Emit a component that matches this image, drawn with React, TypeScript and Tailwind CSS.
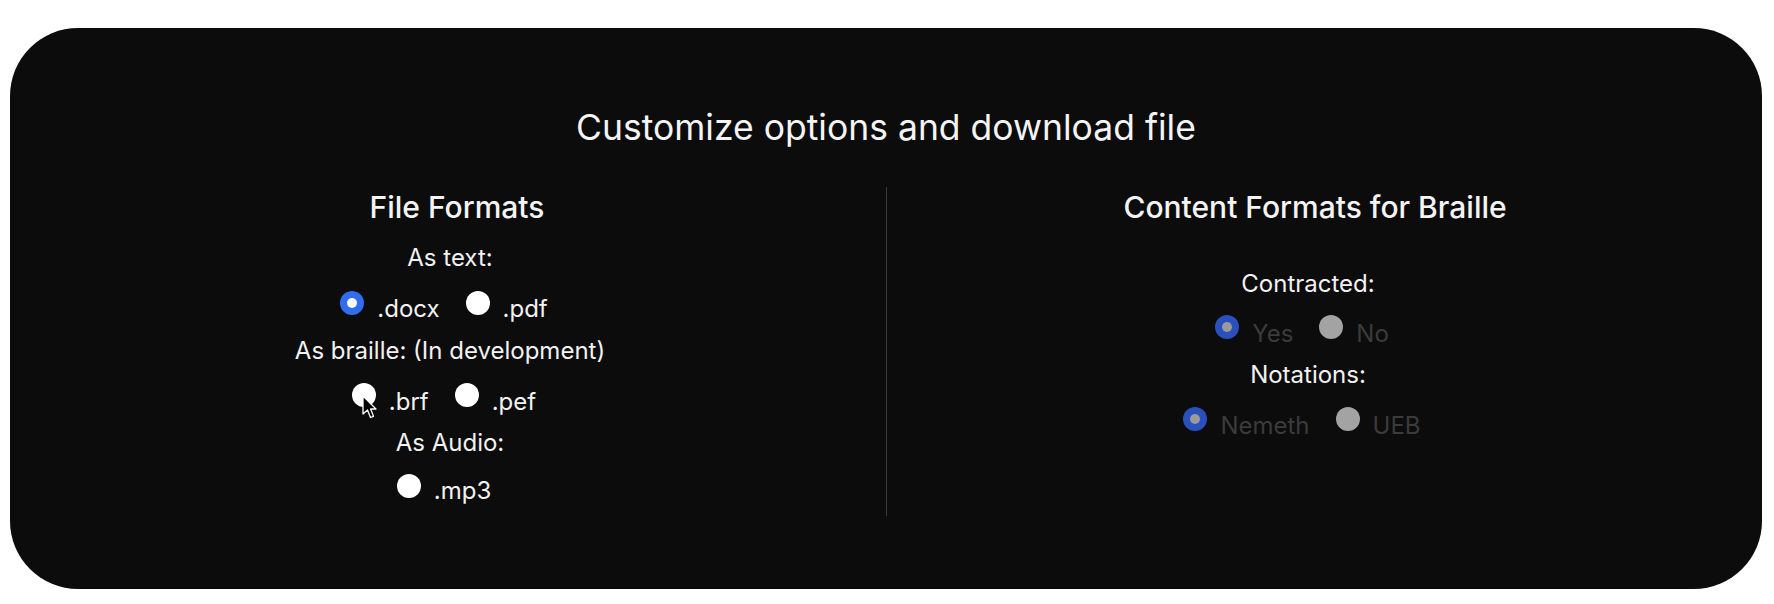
import React from "react";

type Opt = { label: string; checked?: boolean; cursor?: boolean };

function Radio({ checked, disabled, cursor }: { checked?: boolean; disabled?: boolean; cursor?: boolean }) {
  let outer = "bg-white";
  let inner: string | null = null;
  if (checked && !disabled) {
    outer = "bg-[#2f6cf0]";
    inner = "bg-white";
  } else if (checked && disabled) {
    outer = "bg-[#2a50bd]";
    inner = "bg-[#9a9a9a]";
  } else if (!checked && disabled) {
    outer = "bg-[#a3a3a3]";
  }
  return (
    <span className={`relative flex h-[24px] w-[24px] shrink-0 items-center justify-center rounded-full ${outer}`}>
      {inner && <span className={`h-[10px] w-[10px] rounded-full ${inner}`} />}
      {cursor && (
        <svg
          className="absolute left-[10px] top-[12px]"
          width="16"
          height="25"
          viewBox="0 0 16 25"
        >
          <path
            d="M1 1 L1 19 L5.5 15 L8.5 22.5 L11.5 21.3 L8.6 14 L14 14 Z"
            fill="#000"
            stroke="#fff"
            strokeWidth="1.3"
            strokeLinejoin="round"
          />
        </svg>
      )}
    </span>
  );
}

function Row({ opts, disabled, mt, textMt }: { opts: Opt[]; disabled?: boolean; mt: string; textMt: string }) {
  return (
    <div className={`flex items-start pr-[12px] ${mt}`}>
      {opts.map((o, i) => (
        <div key={o.label} className={`flex items-start ${i > 0 ? "ml-[26px]" : ""}`}>
          <Radio checked={o.checked} disabled={disabled} cursor={o.cursor} />
          <span
            className={`ml-[13px] text-[24px] leading-[30px] ${textMt} ${
              disabled ? "text-[#3b3b3b]" : "text-[#f2f2f2]"
            }`}
          >
            {o.label}
          </span>
        </div>
      ))}
    </div>
  );
}

function Label({ children, mt }: { children: React.ReactNode; mt: string }) {
  return <div className={`text-[24px] leading-[30px] text-[#f2f2f2] ${mt}`}>{children}</div>;
}

export default function App() {
  return (
    <div
      className="min-h-[604px] w-full bg-white pt-[28px]"
      style={{ fontFamily: "Inter, 'Noto Sans', 'Liberation Sans', sans-serif" }}
    >
      <div className="ml-[10px] h-[561px] w-[1752px] rounded-[68px] bg-[#0c0c0c]">
        <div className="pt-[78px] text-center text-[35.5px] leading-[44px] text-[#f4f4f4]">
          Customize options and download file
        </div>
        <div className="mt-[37px] flex h-[329px] pl-[4px]">
          <div className="flex w-[872px] flex-col items-center pt-[2px]">
            <div className="pl-[14px] text-[30px] font-medium leading-[36px] text-[#f4f4f4]">File Formats</div>
            <Label mt="mt-[18px]">As text:</Label>
            <Row
              mt="mt-[18px]"
              textMt="mt-[3px]"
              opts={[{ label: ".docx", checked: true }, { label: ".pdf" }]}
            />
            <Label mt="mt-[12px]">As braille: (In development)</Label>
            <Row
              mt="mt-[17px]"
              textMt="mt-[4px]"
              opts={[{ label: ".brf", cursor: true }, { label: ".pef" }]}
            />
            <Label mt="mt-[11px]">As Audio:</Label>
            <Row mt="mt-[16px]" textMt="mt-[2px]" opts={[{ label: ".mp3" }]} />
          </div>
          <div className="w-px bg-[#3a3a3a]" />
          <div className="flex w-[842px] flex-col items-center pt-[2px]">
            <div className="pl-[14px] text-[30px] font-medium leading-[36px] text-[#f4f4f4]">
              Content Formats for Braille
            </div>
            <Label mt="mt-[44px]">Contracted:</Label>
            <Row
              disabled
              mt="mt-[16px]"
              textMt="mt-[4px]"
              opts={[{ label: "Yes", checked: true }, { label: "No" }]}
            />
            <Label mt="mt-[11px]">Notations:</Label>
            <Row
              disabled
              mt="mt-[17px]"
              textMt="mt-[4px]"
              opts={[{ label: "Nemeth", checked: true }, { label: "UEB" }]}
            />
          </div>
        </div>
      </div>
    </div>
  );
}
